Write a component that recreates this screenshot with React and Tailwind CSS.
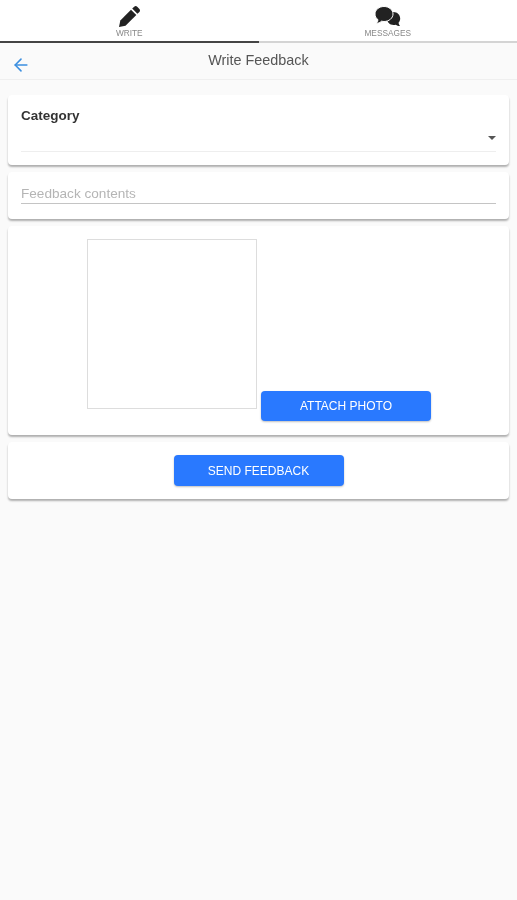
import { ArrowLeft } from "lucide-react";

const font = { fontFamily: '"Liberation Sans", Arial, sans-serif' };

const Card = ({ className, children }) => (
  <div
    className={`mx-2 bg-white rounded-sm shadow-[0_2px_2px_rgba(0,0,0,0.3)] ${className}`}
  >
    {children}
  </div>
);

const PencilIcon = () => (
  <svg width="21" height="21" viewBox="0 0 21 21" className="text-[#222]">
    <path fill="currentColor" d="M0 21l1.300-6.500L12 3.800l5.300 5.300L6.500 19.700z" />
    <path
      fill="currentColor"
      d="M13.200 2.600L15.200.7c.9-.9 2.100-.9 3 0l2.200 2.200c.8.9.8 2.100 0 3l-2 1.900z"
    />
  </svg>
);

const BubblesIcon = () => (
  <svg width="28" height="21" viewBox="0 0 28 21" className="text-[#222]">
    <path
      fill="currentColor"
      d="M19.500 6c3.700 0 6.700 2.900 6.700 6.500 0 1.700-.7 3.200-1.700 4.300.2 1.200.7 2.300 1.500 3.200-1.700 0-3.100-.5-4.300-1.300-.7.200-1.400.3-2.200.3-3.700 0-6.500-2.900-6.500-6.500S15.800 6 19.500 6z"
    />
    <path
      fill="currentColor"
      stroke="white"
      strokeWidth="1"
      d="M10 .5c5 0 9 3.400 9 7.500s-4 7.500-9 7.500c-.9 0-1.800-.1-2.600-.3-1.300 1.300-3.100 2.200-5.100 2.300 1-1.100 1.600-2.400 1.700-3.800C2 12.300 1 10.300 1 8 1 3.900 5 .5 10 .5z"
    />
  </svg>
);

const App = () => {
  return (
    <div
      className="min-h-[900px] bg-[#fafafa] flex flex-col blur-[0.4px]"
      style={font}
    >
      <div className="bg-white h-[43px] flex shrink-0">
        <div className="w-1/2 flex flex-col items-center pt-[6px] border-b-2 border-[#444]">
          <PencilIcon />
          <span className="text-[8.3px] leading-[10px] mt-[1px] text-[#888]">WRITE</span>
        </div>
        <div className="w-1/2 flex flex-col items-center pt-[6px] border-b-2 border-[#d4d4d4]">
          <BubblesIcon />
          <span className="text-[8.3px] leading-[10px] mt-[1px] text-[#888]">MESSAGES</span>
        </div>
      </div>

      <div className="h-[37px] shrink-0 border-b border-[#efefef] flex items-center relative">
        <ArrowLeft className="ml-[11px] mt-[7px] text-[#3b8fe0]" size={20} strokeWidth={1.9} />
        <span className="absolute left-0 right-0 top-[8px] text-center text-[14.4px] leading-[18px] text-[#555]">
          Write Feedback
        </span>
      </div>

      <Card className="mt-[15px] h-[70px] px-[13px] pt-[13px]">
        <div className="text-[13.5px] leading-[16px] font-bold text-[#333]">Category</div>
        <div className="h-[28px] border-b border-[#eeeeee] flex justify-end items-center">
          <div className="w-0 h-0 border-l-[4px] border-r-[4px] border-t-[4px] border-l-transparent border-r-transparent border-t-[#555]" />
        </div>
      </Card>

      <Card className="mt-[7px] h-[47px] px-[13px] pt-[13px]">
        <div className="text-[13.6px] leading-[18px] h-[18px] text-[#b5b5b5]">Feedback contents</div>
        <div className="border-b border-[#c4c4c4] h-[1px]" />
      </Card>

      <Card className="mt-[7px] h-[209px] pl-[79px] pt-[13px] flex items-start">
        <div className="w-[170px] h-[170px] border border-[#dddddd] shrink-0" />
        <button className="ml-[4px] mt-[152px] w-[170px] h-[30px] bg-[#2979ff] rounded-sm text-white text-[12px] shadow-[0_1px_2px_rgba(0,0,0,0.25)]">
          ATTACH PHOTO
        </button>
      </Card>

      <Card className="mt-[7px] h-[57px] flex justify-center pt-[13px]">
        <button className="w-[170px] h-[31px] bg-[#2979ff] rounded-sm text-white text-[12px] shadow-[0_1px_2px_rgba(0,0,0,0.25)]">
          SEND FEEDBACK
        </button>
      </Card>
    </div>
  );
};

export default App;
